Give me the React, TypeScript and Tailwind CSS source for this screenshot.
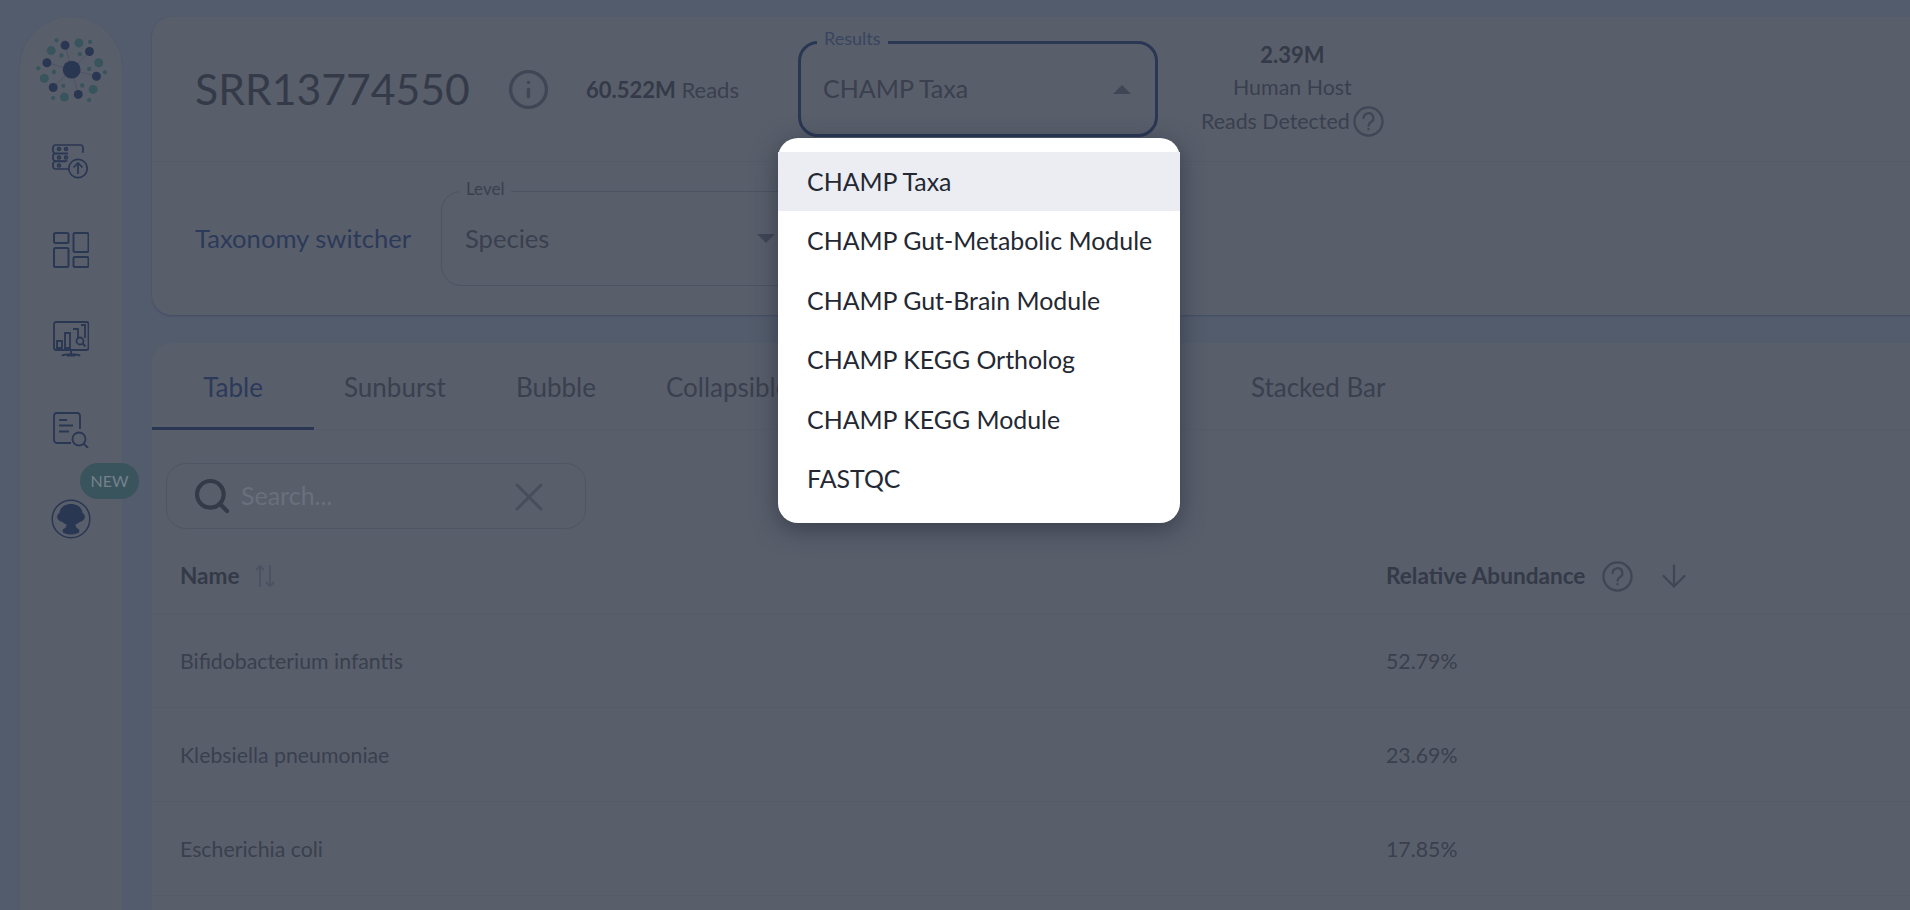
import { ArrowDown, Info, Search, X } from "lucide-react";

const navyDots = [
    [193, 131], [267, 150], [138, 184], [288, 225], [157, 259], [233, 280],
];
const tealDots = [
    [235, 124], [151, 147], [295, 184], [130, 231], [278, 265], [191, 288],
];
const smallDots = [
    [167, 116], [269, 121], [182, 162], [238, 158], [112, 201], [159, 212],
    [266, 203], [314, 213], [188, 254], [245, 253], [157, 291], [266, 297],
];

function Logo() {
    return (
        <svg viewBox="100 106 225 200" className="h-[66px] w-[75px] shrink-0">
            {navyDots.map(([x, y]) => (
                <line key={`l${x}`} x1={213} y1={205} x2={x} y2={y} stroke="#464e62" strokeWidth="2" />
            ))}
            {navyDots.map(([x, y]) => <circle key={`n${x}`} cx={x} cy={y} r="13.5" fill="#2a3753" />)}
            {tealDots.map(([x, y]) => <circle key={`t${x}`} cx={x} cy={y} r="13.5" fill="#38545c" />)}
            {smallDots.map(([x, y]) => <circle key={`s${x}${y}`} cx={x} cy={y} r="6.5" fill="#38545c" />)}
            <circle cx="213" cy="205" r="27" fill="#2a3753" />
        </svg>
    );
}

function UploadIcon() {
    return (
        <svg viewBox="0 0 36 35" fill="none" stroke="#2a3753" strokeWidth="1.7" className="ml-[-3px] h-[35px] w-[36px]">
            <path d="M16 9.5H3.5A2.7 2.7 0 0 1 1 7V3.5A2.7 2.7 0 0 1 3.5 1h25A2.7 2.7 0 0 1 31 3.5V7q0 1-.7 1.6" />
            <path d="M16 9.5H3.5A2.7 2.7 0 0 0 1 12v2.5A2.7 2.7 0 0 0 3.5 17h12" />
            <path d="M14 17.5H3.5A2.7 2.7 0 0 0 1 20v2.7a2.7 2.7 0 0 0 2.5 2.3h13" />
            <circle cx="7" cy="5" r="1.4" /><circle cx="14" cy="5" r="1.4" />
            <circle cx="7" cy="13.5" r="1.4" /><circle cx="14" cy="13.5" r="1.4" />
            <circle cx="7" cy="21.5" r="1.4" />
            <circle cx="26" cy="24.5" r="9.2" />
            <path d="M26 30v-11M21.5 23.5 26 19l4.5 4.5" />
        </svg>
    );
}

function DashboardIcon() {
    return (
        <svg viewBox="0 0 36 36" fill="none" stroke="#2a3753" strokeWidth="2" className="h-[36px] w-[36px]">
            <rect x="1" y="1" width="14.5" height="10" rx="1.5" />
            <rect x="20.5" y="1" width="15" height="19" rx="1.5" />
            <rect x="1" y="16" width="14.5" height="19" rx="1.5" />
            <rect x="20.5" y="25" width="15" height="10" rx="1.5" />
        </svg>
    );
}

function ChartIcon() {
    return (
        <svg viewBox="0 0 36 36" fill="none" stroke="#2a3753" strokeWidth="1.8" className="h-[36px] w-[36px]">
            <rect x="1" y="1" width="34.5" height="28" rx="2" />
            <path d="M4 20h5v7H4zM12 12h5v15h-5zM20 8h5v9M28 4h4v13M14 34.5h8M18 29v4M9 35c1-1.5 3-1.5 5-1.5h8c2 0 4 0 5 1.5" />
            <circle cx="27" cy="20" r="3.5" />
            <path d="m29.5 22.5 3 3" />
        </svg>
    );
}

function ReportIcon() {
    return (
        <svg viewBox="0 0 36 36" fill="none" stroke="#2a3753" strokeWidth="1.8" className="h-[36px] w-[36px]">
            <path d="M18 31H4a3 3 0 0 1-3-3V4a3 3 0 0 1 3-3h20a3 3 0 0 1 3 3v13" />
            <path d="M6 8h8M6 13.5h14M6 19.5h10" />
            <circle cx="26" cy="27" r="6.5" />
            <path d="m31 32 4 4" />
        </svg>
    );
}

function AvatarIcon() {
    return (
        <svg viewBox="0 0 40 40" className="h-[40px] w-[40px]">
            <circle cx="20" cy="20" r="18.8" fill="none" stroke="#2a3753" strokeWidth="1.5" />
            <path fill="#2a3753" d="M20 5c6.5 0 11 3.5 11.5 9 2 1 3 3.5 2 5.5-1 2-2.5 3-5 3.5-1.5 1.5-3 2-4 2.500 0 2 1 3.500 3 4.500 1 .5 1 2.500.5 3.500-2.500 1.500-5 2-8 2s-5.500-.5-8-2c-.5-1-.5-3 .5-3.500 2-1 3-2.500 3-4.500-1-.5-2.500-1-4-2.500-2.500-.5-4-1.500-5-3.500-1-2 0-4.500 2-5.500C9 8.500 13.500 5 20 5Z" />
        </svg>
    );
}

function HelpIcon({ className }: { className: string }) {
    return (
        <svg viewBox="0 0 32 32" fill="none" stroke="#404655" strokeWidth="2.4" className={className}>
            <circle cx="16" cy="16" r="14.5" />
            <path d="M11 12.5a5 5 0 1 1 7.5 4.3c-1.7 1-2.5 1.8-2.5 3.7" strokeLinecap="round" />
            <circle cx="16" cy="24" r="1.2" fill="#404655" stroke="none" />
        </svg>
    );
}

function SortIcon() {
    return (
        <svg viewBox="0 0 20 24" fill="none" stroke="#4c5262" strokeWidth="2" className="h-[24px] w-[20px]">
            <path d="M5 23V2M1 6l4-4 4 4M15 1v21M11 18l4 4 4-4" />
        </svg>
    );
}

const menuItems = [
    "CHAMP Taxa",
    "CHAMP Gut-Metabolic Module",
    "CHAMP Gut-Brain Module",
    "CHAMP KEGG Ortholog",
    "CHAMP KEGG Module",
    "FASTQC",
];

const rows = [
    { name: "Bifidobacterium infantis", value: "52.79%" },
    { name: "Klebsiella pneumoniae", value: "23.69%" },
    { name: "Escherichia coli", value: "17.85%" },
];

export default function App() {
    return (
        <div className="relative flex h-[910px] w-[1910px] overflow-hidden bg-[#535c6c] font-['Lato',sans-serif] text-[#3a404e]">
            {/* Sidebar */}
            <aside className="relative mt-[17px] ml-[19px] flex h-[893px] w-[104px] shrink-0 flex-col items-center rounded-t-[52px] border-x border-[#535a6a] bg-[#595e6b] pt-[20px]">
                <Logo />
                <div className="mt-[41px]"><UploadIcon /></div>
                <div className="mt-[53px]"><DashboardIcon /></div>
                <div className="mt-[53px]"><ChartIcon /></div>
                <div className="mt-[55px]"><ReportIcon /></div>
                <div className="mt-[51px]"><AvatarIcon /></div>
                <span className="absolute top-[446px] left-[60px] flex h-[36px] w-[59px] items-center justify-center rounded-full bg-[#3a545e] text-[16px] text-[#75828c]">
                    NEW
                </span>
            </aside>

            <main className="ml-[29px] flex w-[1800px] shrink-0 flex-col pt-[17px]">
                {/* Sample header */}
                <section className="h-[298px] rounded-[20px] bg-[#595e6b] shadow-[0_1px_2px_#404c68]">
                    <div className="flex h-[145px] items-center border-b border-[#565b68] pl-[43px]">
                        <h1 className="w-[275px] text-[42.7px] leading-none font-normal text-[#343a48]">SRR13774550</h1>
                        <Info className="ml-[37px] h-[43px] w-[43px] text-[#404655]" strokeWidth={1.9} />
                        <p className="ml-[36px] w-[212px] text-[22px]">
                            <b className="font-bold text-[#343a48]">60.522M</b> Reads
                        </p>
                        <div className="relative flex h-[96px] w-[360px] items-center justify-between rounded-[20px] border-[3px] border-[#2a3753] pr-[24px] pl-[22px]">
                            <span className="absolute top-[-16px] left-[16px] bg-[#595e6b] px-[7px] text-[18px] leading-[20px] text-[#38455f]">Results</span>
                            <span className="text-[25px]">CHAMP Taxa</span>
                            <span className="h-0 w-0 border-x-[9px] border-b-[9px] border-x-transparent border-b-[#404655]" />
                        </div>
                        <div className="mt-[-2px] ml-[43px] flex flex-col items-center text-[21.4px] leading-[33.5px]">
                            <b className="text-[22px] font-bold text-[#343a48]">2.39M</b>
                            <span>Human Host</span>
                            <span className="flex items-center gap-[3px]">
                                Reads Detected
                                <HelpIcon className="h-[31px] w-[31px]" />
                            </span>
                        </div>
                    </div>
                    <div className="flex h-[153px] items-center pl-[43px]">
                        <span className="w-[246px] text-[25.6px] text-[#2c3a5a]">Taxonomy switcher</span>
                        <div className="relative flex h-[95px] w-[357px] items-center justify-between rounded-[20px] border border-[#4d5363] pr-[22px] pl-[23px]">
                            <span className="absolute top-[-13px] left-[17px] bg-[#595e6b] px-[7px] text-[17px] leading-[20px]">Level</span>
                            <span className="text-[25.6px]">Species</span>
                            <span className="h-0 w-0 border-x-[9px] border-t-[9px] border-x-transparent border-t-[#404655]" />
                        </div>
                    </div>
                </section>

                {/* Results */}
                <section className="mt-[28px] flex-1 rounded-t-[20px] bg-[#595e6b]">
                    <nav className="flex h-[87px] items-start border-b border-[#565b68] text-[26px] leading-[30px]">
                        <span className="h-[87px] w-[162px] border-b-[3px] border-[#2a3753] pt-[29px] text-center text-[#2c3a5a]">Table</span>
                        <span className="ml-[30px] pt-[29px]">Sunburst</span>
                        <span className="ml-[70px] pt-[29px]">Bubble</span>
                        <span className="ml-[70px] w-[514px] pt-[29px]">Collapsible Tree</span>
                        <span className="ml-[71px] pt-[29px]">Stacked Bar</span>
                    </nav>

                    <div className="mt-[33px] ml-[14px] flex h-[66px] w-[420px] items-center rounded-[20px] border border-[#4f5564] pr-[32px] pl-[25px]">
                        <Search className="h-[40px] w-[40px] shrink-0 text-[#343a48]" strokeWidth={2.5} />
                        <span className="ml-[9px] flex-1 text-[25px] text-[#6a707c]">Search...</span>
                        <X className="mt-[2px] h-[48px] w-[48px] text-[#474d5b]" strokeWidth={1.5} />
                    </div>

                    <div className="grid h-[85px] grid-cols-[1206px_1fr] items-center border-b border-[#565b68] pt-[10px] pl-[28px] text-[22.6px] font-bold text-[#343a48]">
                        <span className="flex items-center gap-[15px]">
                            Name
                            <SortIcon />
                        </span>
                        <span className="flex items-center">
                            Relative Abundance
                            <HelpIcon className="ml-[17px] h-[31px] w-[31px]" />
                            <ArrowDown className="ml-[23px] h-[36px] w-[36px] text-[#404655]" strokeWidth={1.5} />
                        </span>
                    </div>

                    {rows.map((row) => (
                        <div key={row.name} className="grid h-[94px] grid-cols-[1206px_1fr] items-center border-b border-[#565b68] pt-[3px] pl-[28px] text-[21.3px]">
                            <span>{row.name}</span>
                            <span>{row.value}</span>
                        </div>
                    ))}
                </section>
            </main>

            {/* Results dropdown */}
            <ul className="absolute top-[138px] left-[778px] w-[402px] rounded-[20px] bg-white pt-[14px] pb-[15px] text-[24.9px] text-[#232833] shadow-[0_6px_24px_rgba(30,35,50,0.55)]">
                {menuItems.map((item, i) => (
                    <li key={item} className={`flex h-[59.4px] items-center pl-[29px] ${i === 0 ? "bg-[#ecedf2]" : ""}`}>
                        {item}
                    </li>
                ))}
            </ul>
        </div>
    );
}
